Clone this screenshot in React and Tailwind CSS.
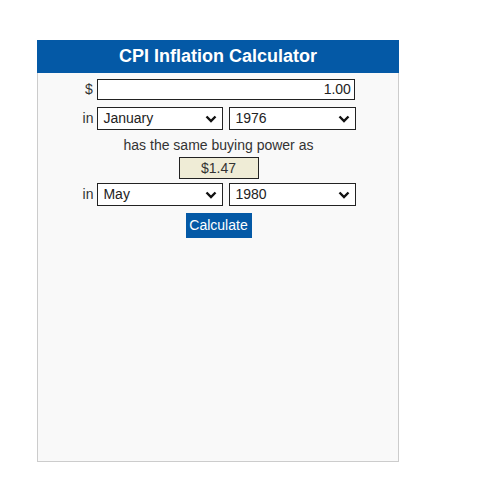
import { useState } from 'react';

const months = ['January', 'February', 'March', 'April', 'May', 'June', 'July', 'August', 'September', 'October', 'November', 'December'];
const years = Array.from({ length: 50 }, (_, i) => String(1950 + i));

const Chevron = () => (
  <svg width="12" height="8" viewBox="0 0 12 8" className="pointer-events-none absolute right-[6px] top-1/2 -translate-y-1/2">
    <path d="M1.5 1.5 L6 6 L10.5 1.5" fill="none" stroke="#111" strokeWidth="2.4" />
  </svg>
);

const Select = ({ value, options, onChange, width }) => (
  <div className={`relative ${width}`}>
    <select
      value={value}
      onChange={(e) => onChange(e.target.value)}
      className="w-full h-[23px] appearance-none border border-[#222] bg-white pl-[5px] text-[14px] text-[#222] outline-none"
    >
      {options.map((o) => (
        <option key={o}>{o}</option>
      ))}
    </select>
    <Chevron />
  </div>
);

export default function App() {
  const [amount, setAmount] = useState('1.00');
  const [m1, setM1] = useState('January');
  const [y1, setY1] = useState('1976');
  const [m2, setM2] = useState('May');
  const [y2, setY2] = useState('1980');

  return (
    <div className="min-h-[493px] bg-white pt-[40px] pl-[37px] font-['Liberation_Sans',Arial,sans-serif]">
      <div className="w-[362px] h-[422px] border border-[#ccc] bg-[#f9f9f9]">
        <div className="-mx-px -mt-px h-[33px] bg-[#0459a6] flex items-center justify-center">
          <h1 className="text-white font-bold text-[18px]">CPI Inflation Calculator</h1>
        </div>

        <div className="flex flex-col items-center text-[14px] text-[#333] pl-[4px]">
          <div className="mt-[6px] flex items-center gap-[4px]">
            <span>$</span>
            <input
              value={amount}
              onChange={(e) => setAmount(e.target.value)}
              className="w-[258px] h-[21px] border border-[#222] bg-white text-right pr-[3px] text-[14px] text-[#222] outline-none"
            />
          </div>

          <div className="mt-[7px] flex items-center gap-[4px] pr-[1px]">
            <span>in</span>
            <div className="flex gap-[6px]">
              <Select value={m1} options={months} onChange={setM1} width="w-[126px]" />
              <Select value={y1} options={years} onChange={setY1} width="w-[127px]" />
            </div>
          </div>

          <p className="mt-[5px] -ml-[3px] leading-[20px]">has the same buying power as</p>

          <div className="mt-[2px] -ml-[3px] w-[80px] h-[22px] border border-[#222] bg-[#efecd6] flex items-center justify-center text-[#333]">
            $1.47
          </div>

          <div className="mt-[4px] flex items-center gap-[4px] pr-[1px]">
            <span>in</span>
            <div className="flex gap-[6px]">
              <Select value={m2} options={months} onChange={setM2} width="w-[126px]" />
              <Select value={y2} options={years} onChange={setY2} width="w-[127px]" />
            </div>
          </div>

          <button className="mt-[7px] -ml-[3px] w-[66px] h-[25px] bg-[#0459a6] text-white text-[14px]">
            Calculate
          </button>
        </div>
      </div>
    </div>
  );
}
